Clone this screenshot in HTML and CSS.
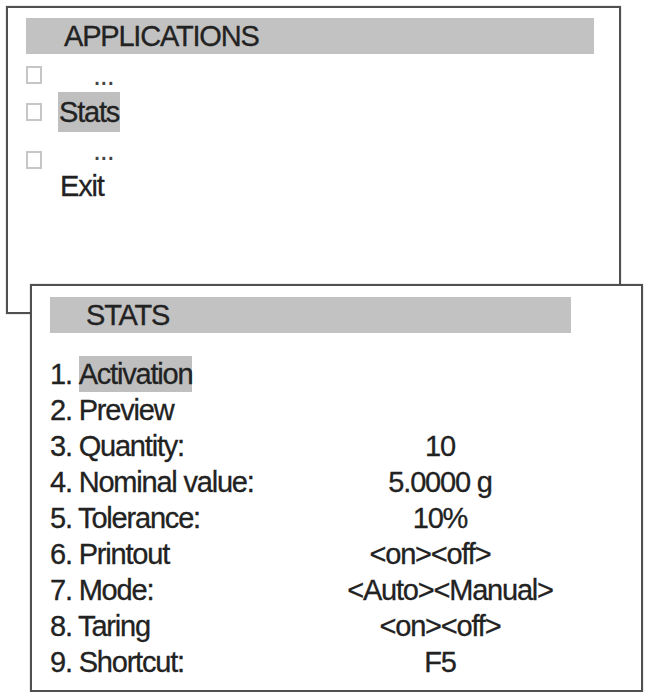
FILE: index.html
```html
<!DOCTYPE html>
<html>
<head>
  <meta charset="utf-8">
  <link rel="stylesheet" href="styles.css">
</head>
<body>
  <div class="screen">

    <div class="panel panel-apps">
      <div class="title-bar apps-bar">APPLICATIONS</div>
      <div class="app-list">
        <div class="app-row row-a"><span class="check"></span><span class="dots">...</span></div>
        <div class="app-row row-b"><span class="check"></span><span class="sel stats-sel">Stats</span></div>
        <div class="app-row row-c"><span class="check"></span><span class="dots">...</span></div>
        <div class="app-row row-d"><span class="no-check"></span><span class="exit">Exit</span></div>
      </div>
    </div>

    <div class="panel panel-stats">
      <div class="title-bar stats-bar">STATS</div>
      <div class="stat-list">
        <div class="label">1. <span class="sel">Activation</span></div><div class="value"></div>
        <div class="label">2. Preview</div><div class="value"></div>
        <div class="label">3. Quantity:</div><div class="value">10</div>
        <div class="label">4. Nominal value:</div><div class="value">5.0000 g</div>
        <div class="label">5. Tolerance:</div><div class="value">10%</div>
        <div class="label">6. Printout</div><div class="value nudge-left">&lt;on&gt;&lt;off&gt;</div>
        <div class="label">7. Mode:</div><div class="value nudge-right">&lt;Auto&gt;&lt;Manual&gt;</div>
        <div class="label">8. Taring</div><div class="value">&lt;on&gt;&lt;off&gt;</div>
        <div class="label">9. Shortcut:</div><div class="value">F5</div>
      </div>
    </div>

  </div>
</body>
</html>
```

FILE: styles.css
```css
body {
  margin: 0;
  background: #fff;
  color: #222;
  font-family: "Liberation Sans", Arial, sans-serif;
  font-size: 29px;
  letter-spacing: -1.2px;
  -webkit-text-stroke: 0.3px #222;
}

.screen {
  padding: 6px 0 0 6px;
}

.panel {
  box-sizing: border-box;
  background: #fff;
  border: 2px solid #505050;
  box-shadow: 0 0 1px rgba(0, 0, 0, 0.45);
}

.panel-apps {
  width: 615px;
  height: 308px;
}

/* second window sits over the bottom of the first one */
.panel-stats {
  position: relative;
  width: 613px;
  margin: -30px 0 0 24px;
  padding-bottom: 10px;
}

.title-bar {
  background: #c2c2c2;
  height: 36px;
  line-height: 36px;
}

.apps-bar {
  margin: 10px 25px 0 18px;
  padding-left: 38px;
}

.stats-bar {
  margin: 11px 0 0 18px;
  width: 521px;
  padding-left: 36px;
  box-sizing: border-box;
}

.sel {
  display: inline-block;
  background: #bfbfbf;
}

/* applications list */
.app-list {
  margin: 4px 0 0 18px;
}

.app-row {
  display: flex;
  align-items: center;
  gap: 16px;
}

.row-a { height: 34px; line-height: 34px; }
.row-b { height: 40px; line-height: 40px; }
.row-c { height: 37px; line-height: 37px; }
.row-d { height: 34px; line-height: 34px; }

.row-c .check {
  align-self: flex-end;
}

.check,
.no-check {
  box-sizing: border-box;
  width: 16px;
  height: 18px;
  flex: none;
}

.check {
  border: 2px solid #c6c6c6;
}

.dots {
  padding-left: 35px;
  color: #444;
  -webkit-text-stroke: 0;
}

.stats-sel {
  height: 40px;
  padding: 0 1px;
}

.exit {
  padding-left: 2px;
}

/* stats settings */
.stat-list {
  display: grid;
  grid-template-columns: 250px 280px;
  grid-auto-rows: 36px;
  line-height: 36px;
  margin: 23px 0 0 18px;
}

.value {
  text-align: center;
}

.nudge-left {
  padding-right: 20px;
}

.nudge-right {
  padding-left: 20px;
}
```
